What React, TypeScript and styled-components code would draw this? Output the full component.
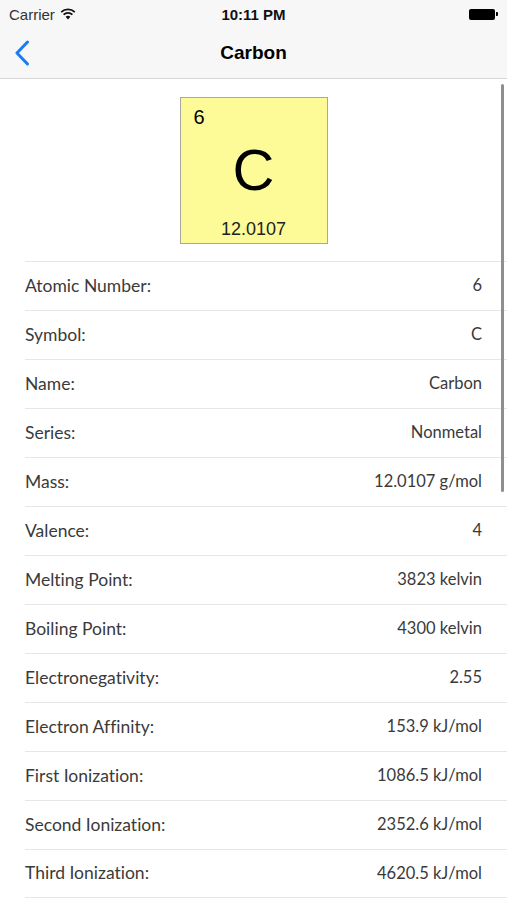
import React from 'react'
import styled, { createGlobalStyle } from 'styled-components'

const GlobalStyle = createGlobalStyle`
  html, body {
    margin: 0;
    padding: 0;
    background: #ffffff;
  }
  body {
    font-family: 'Lato', 'Noto Sans', sans-serif;
    -webkit-font-smoothing: antialiased;
  }
`

const Screen = styled.div`
  position: relative;
  width: 507px;
  height: 900px;
  overflow: hidden;
  background: #fff;
`

const Header = styled.header`
  background: #f7f7f7;
  border-bottom: 1px solid #d6d6d6;
`

const StatusBar = styled.div`
  height: 28px;
  display: grid;
  grid-template-columns: 1fr auto 1fr;
  align-items: center;
  padding: 0 9px;
  font-family: 'Liberation Sans', 'Inter', sans-serif;
  font-size: 15px;
  color: #111;
`

const Carrier = styled.div`
  display: flex;
  align-items: center;
  gap: 5px;
  color: #333;
`

const Clock = styled.div`
  font-weight: 700;
  font-size: 15px;
`

const Battery = styled.div`
  justify-self: end;
  display: flex;
  align-items: center;
  gap: 1px;
`

const BatteryBody = styled.div`
  width: 26px;
  height: 11px;
  border-radius: 2px;
  background: #000;
`

const BatteryTip = styled.div`
  width: 2px;
  height: 4px;
  border-radius: 0 1px 1px 0;
  background: #000;
`

const NavBar = styled.nav`
  height: 50px;
  display: grid;
  grid-template-columns: 60px 1fr 60px;
  align-items: center;
`

const BackButton = styled.button`
  border: 0;
  background: none;
  padding: 0 0 0 14px;
  display: flex;
  align-items: center;
  height: 100%;
  cursor: pointer;
`

const Title = styled.h1`
  margin: 0;
  text-align: center;
  font-family: 'Liberation Sans', 'Inter', sans-serif;
  font-size: 19px;
  font-weight: 700;
  color: #000;
`

const TileSection = styled.section`
  display: flex;
  justify-content: center;
  padding: 18px 0 17px;
`

const Tile = styled.div`
  width: 146px;
  height: 145px;
  border: 1px solid #a8a8a0;
  background: #fdfb98;
  display: grid;
  grid-template-rows: 32px 1fr 32px;
  font-family: 'Liberation Sans', 'Inter', sans-serif;
  color: #000;
`

const TileNumber = styled.div`
  font-size: 20px;
  padding: 8px 0 0 13px;
`

const TileSymbol = styled.div`
  font-size: 58px;
  display: flex;
  align-items: center;
  justify-content: center;
  line-height: 1;
  margin-top: -2px;
`

const TileMass = styled.div`
  font-size: 18px;
  text-align: center;
  color: #222;
  align-self: end;
  padding-bottom: 3px;
`

const List = styled.ul`
  list-style: none;
  margin: 0;
  padding: 0 0 0 25px;
`

const Row = styled.li`
  display: flex;
  justify-content: space-between;
  align-items: center;
  box-sizing: border-box;
  height: 49px;
  padding: 0 25px 2px 0;
  border-top: 1px solid #e6e6e6;
  font-size: 17.5px;
  font-variant-ligatures: none;
  color: #3a3a3a;
  &:last-child {
    border-bottom: 1px solid #e6e6e6;
  }
`

const Value = styled.span`
  font-size: 16.5px;
`

const ScrollIndicator = styled.div`
  position: absolute;
  right: 3px;
  top: 84px;
  width: 3px;
  height: 408px;
  border-radius: 2px;
  background: #8f8f8f;
`

const rows: [string, string][] = [
  ['Atomic Number:', '6'],
  ['Symbol:', 'C'],
  ['Name:', 'Carbon'],
  ['Series:', 'Nonmetal'],
  ['Mass:', '12.0107 g/mol'],
  ['Valence:', '4'],
  ['Melting Point:', '3823 kelvin'],
  ['Boiling Point:', '4300 kelvin'],
  ['Electronegativity:', '2.55'],
  ['Electron Affinity:', '153.9 kJ/mol'],
  ['First Ionization:', '1086.5 kJ/mol'],
  ['Second Ionization:', '2352.6 kJ/mol'],
  ['Third Ionization:', '4620.5 kJ/mol'],
]

export default function App() {
  return (
    <Screen>
      <GlobalStyle />
      <Header>
        <StatusBar>
          <Carrier>
            Carrier
            <svg width='16' height='12' viewBox='0 0 16 12'>
              <path d='M8 11.5 L5.6 8.7 A3.6 3.6 0 0 1 10.4 8.7 Z' fill='#111' />
              <path d='M3.6 6.6 A6.4 6.4 0 0 1 12.4 6.6' stroke='#111' strokeWidth='1.8' fill='none' />
              <path d='M1.2 4.2 A9.8 9.8 0 0 1 14.8 4.2' stroke='#111' strokeWidth='1.8' fill='none' />
            </svg>
          </Carrier>
          <Clock>10:11 PM</Clock>
          <Battery>
            <BatteryBody />
            <BatteryTip />
          </Battery>
        </StatusBar>
        <NavBar>
          <BackButton aria-label='Back'>
            <svg width='16' height='26' viewBox='0 0 16 26'>
              <path d='M13.5 2 L3 13 L13.5 24' stroke='#1a7cf5' strokeWidth='3' fill='none' strokeLinecap='round' strokeLinejoin='round' />
            </svg>
          </BackButton>
          <Title>Carbon</Title>
          <div />
        </NavBar>
      </Header>
      <TileSection>
        <Tile>
          <TileNumber>6</TileNumber>
          <TileSymbol>C</TileSymbol>
          <TileMass>12.0107</TileMass>
        </Tile>
      </TileSection>
      <List>
        {rows.map(([label, value]) => (
          <Row key={label}>
            <span>{label}</span>
            <Value>{value}</Value>
          </Row>
        ))}
      </List>
      <ScrollIndicator />
    </Screen>
  )
}
